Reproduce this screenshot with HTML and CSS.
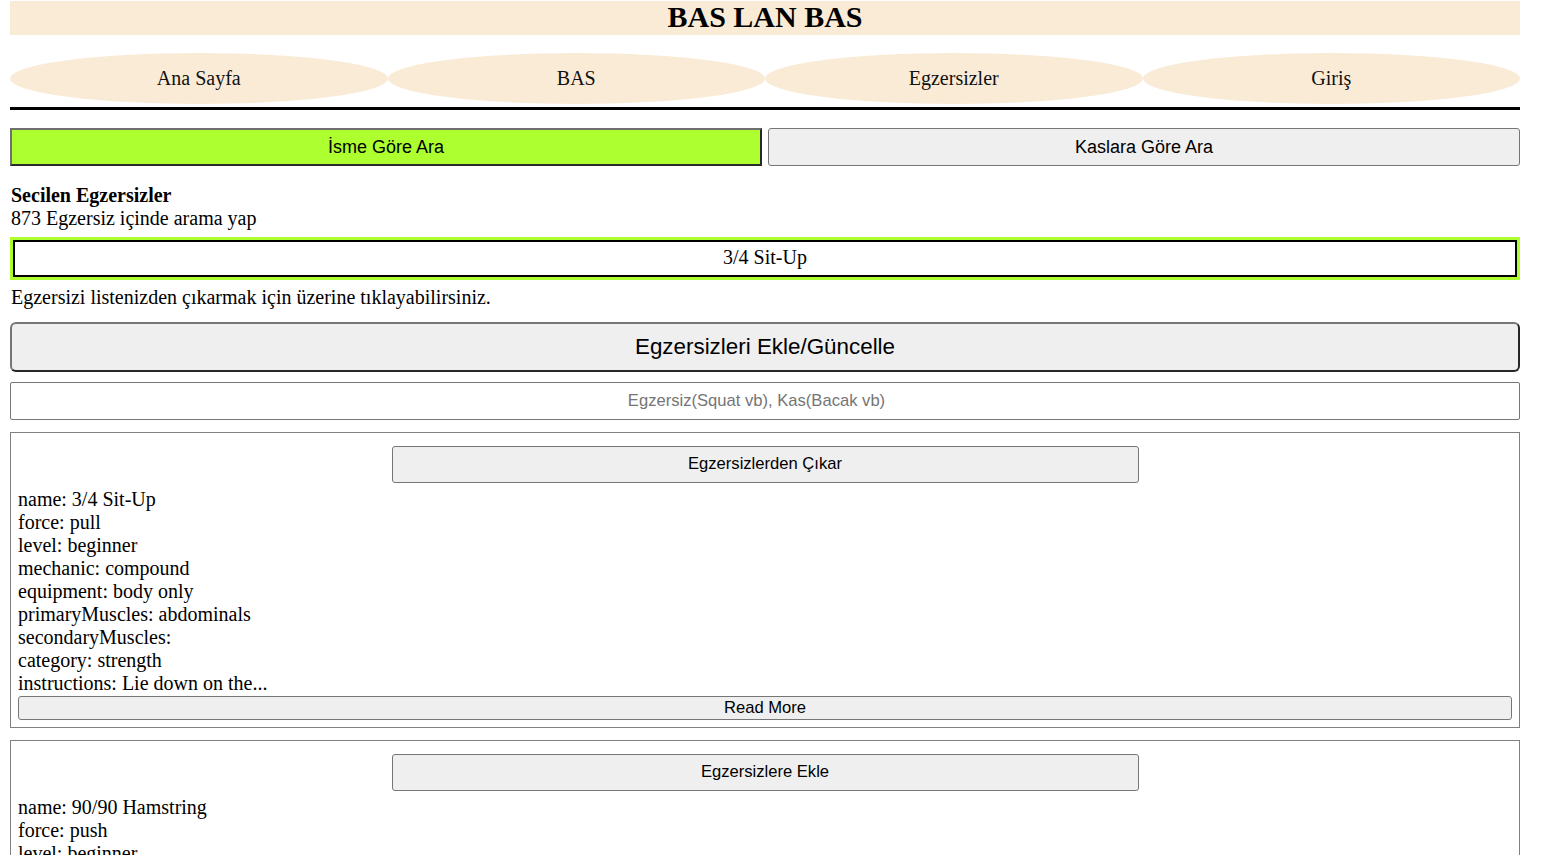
FILE: index.html
```html
<!DOCTYPE html>
<html lang="tr">
<head>
<meta charset="utf-8">
<title>BAS LAN BAS</title>
<link rel="stylesheet" href="styles.css">
</head>
<body>
<div class="page">
  <h1 class="site-title">BAS LAN BAS</h1>
  <nav class="nav">
    <a class="nav-item">Ana Sayfa</a>
    <a class="nav-item">BAS</a>
    <a class="nav-item">Egzersizler</a>
    <a class="nav-item">Giriş</a>
  </nav>
  <div class="tabs">
    <button class="tab tab-active">İsme Göre Ara</button>
    <button class="tab">Kaslara Göre Ara</button>
  </div>
  <div class="selected-title">Secilen Egzersizler</div>
  <div class="text-line">873 Egzersiz içinde arama yap</div>
  <div class="selected-box">
    <div class="selected-item">3/4 Sit-Up</div>
  </div>
  <div class="text-line hint">Egzersizi listenizden çıkarmak için üzerine tıklayabilirsiniz.</div>
  <button class="big-btn">Egzersizleri Ekle/Güncelle</button>
  <input class="search" type="text" placeholder="Egzersiz(Squat vb), Kas(Bacak vb)">
  <div class="card">
    <button class="card-btn">Egzersizlerden Çıkar</button>
    <div class="field">name: 3/4 Sit-Up</div>
    <div class="field">force: pull</div>
    <div class="field">level: beginner</div>
    <div class="field">mechanic: compound</div>
    <div class="field">equipment: body only</div>
    <div class="field">primaryMuscles: abdominals</div>
    <div class="field">secondaryMuscles:</div>
    <div class="field">category: strength</div>
    <div class="field">instructions: Lie down on the...</div>
    <button class="more-btn">Read More</button>
  </div>
  <div class="card">
    <button class="card-btn">Egzersizlere Ekle</button>
    <div class="field">name: 90/90 Hamstring</div>
    <div class="field">force: push</div>
    <div class="field">level: beginner</div>
    <div class="field">mechanic: isolation</div>
    <div class="field">equipment: body only</div>
    <div class="field">primaryMuscles: hamstrings</div>
    <div class="field">secondaryMuscles: calves</div>
    <div class="field">category: stretching</div>
    <div class="field">instructions: Lie on your back...</div>
    <button class="more-btn">Read More</button>
  </div>
</div>
</body>
</html>
```

FILE: styles.css
```css
html, body {
  margin: 0;
  padding: 0;
  background: #fff;
}
body {
  font-family: "Liberation Serif", "Times New Roman", serif;
  font-size: 20px;
  line-height: 23px;
  color: #000;
}
.page {
  width: 1510px;
  margin-left: 10px;
  padding-top: 1px;
  padding-bottom: 40px;
}
.site-title {
  margin: 0;
  height: 34px;
  line-height: 32px;
  background: #faebd7;
  text-align: center;
  font-size: 30px;
  font-weight: bold;
}
.nav {
  display: flex;
  margin-top: 18px;
  padding-bottom: 3px;
  border-bottom: 3px solid #000;
}
.nav-item {
  flex: 1;
  height: 51px;
  line-height: 51px;
  background: #faebd7;
  border-radius: 50%;
  text-align: center;
  color: #111;
  font-size: 20px;
}
.tabs {
  display: flex;
  gap: 6px;
  margin-top: 18px;
}
.tab {
  flex: none;
  box-sizing: border-box;
  width: calc(50% - 3px);
  height: 38px;
  font-family: "Liberation Sans", Arial, sans-serif;
  font-size: 18px;
  color: #000;
  background: #efefef;
  border: 1px solid #767676;
  border-radius: 3px;
  padding: 0;
}
.tab-active {
  background: #adff2f;
  border: 2px solid;
  border-color: #707070 #2a2a2a #2a2a2a #707070;
  border-radius: 0;
}
.selected-title {
  margin-top: 18px;
  font-weight: bold;
  padding-left: 1px;
}
.text-line {
  padding-left: 1px;
}
.selected-box {
  margin-top: 7px;
  border: 3px solid #adff2f;
}
.selected-item {
  border: 2px solid #000;
  padding: 4px 0 6px;
  text-align: center;
}
.hint {
  margin-top: 6px;
}
.big-btn {
  display: block;
  width: 100%;
  height: 50px;
  margin-top: 13px;
  font-family: "Liberation Sans", Arial, sans-serif;
  font-size: 22.4px;
  color: #000;
  background: #efefef;
  border: 2px solid;
  border-color: #767676 #262626 #262626 #767676;
  border-radius: 6px;
  padding: 0;
}
.search {
  display: block;
  box-sizing: border-box;
  width: 100%;
  height: 38px;
  margin: 10px 0 0;
  padding: 0 18px 0 1px;
  border: 1px solid #767676;
  border-radius: 2px;
  font-family: "Liberation Sans", Arial, sans-serif;
  font-size: 16.6px;
  text-align: center;
  color: #000;
  background: #fff;
}
.search::placeholder {
  color: #757575;
}
.card {
  margin-top: 12px;
  border: 1px solid #808080;
  padding: 13px 7px 7px;
}
.card-btn {
  display: block;
  width: 50%;
  height: 37px;
  margin: 0 auto 5px;
  font-family: "Liberation Sans", Arial, sans-serif;
  font-size: 16.6px;
  color: #000;
  background: #efefef;
  border: 1px solid #767676;
  border-radius: 3px;
  padding: 0 0 1px;
}
.field {
  white-space: nowrap;
}
.more-btn {
  display: block;
  width: 100%;
  height: 24px;
  margin-top: 1px;
  font-family: "Liberation Sans", Arial, sans-serif;
  font-size: 16.6px;
  color: #000;
  background: #efefef;
  border: 1px solid #767676;
  border-radius: 3px;
  padding: 0;
}
```
